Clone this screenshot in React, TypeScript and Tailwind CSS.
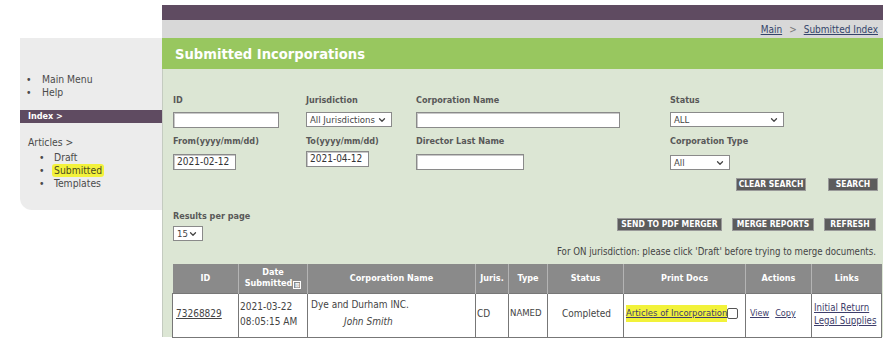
import { ChevronDown } from "lucide-react";

const font = "font-['DejaVu_Sans_Condensed','DejaVu_Sans',sans-serif]";

function Label({ children }: { children: React.ReactNode }) {
  return <div className="h-[13px] text-[9px] font-bold leading-[13px] text-[#585858]">{children}</div>;
}

function TextBox({ w, value, className = "" }: { w: string; value?: string; className?: string }) {
  return (
    <div
      className={`${w} h-[16px] border border-[#8a8a8a] bg-white px-[3px] text-[10px] leading-[14px] text-[#333] shadow-[inset_1px_1px_0_#c8c8c8] ${className}`}
    >
      {value}
    </div>
  );
}

function Select({ w, value }: { w: string; value: string }) {
  return (
    <div
      className={`${w} flex h-[15px] items-center justify-between border border-[#8a8a8a] bg-white pl-[3px] pr-[4px] text-[9.5px] leading-[13px] text-[#444]`}
    >
      <span>{value}</span>
      <ChevronDown size={10} strokeWidth={3} className="text-[#444]" />
    </div>
  );
}

function Btn({ children, w }: { children: React.ReactNode; w: string }) {
  return (
    <div
      className={`${w} flex h-[13px] items-center justify-center border border-[#9a9a9a] bg-[#5c5c5c] text-[8.5px] font-bold uppercase leading-none text-white`}
    >
      {children}
    </div>
  );
}

export default function App() {
  return (
    <div className={`flex h-[358px] w-[892px] overflow-hidden bg-white ${font}`}>
      {/* sidebar */}
      <div className="w-[162px] shrink-0 pl-[20px] pt-[38px]">
        <div className="h-[172px] rounded-bl-[12px] bg-[#ececec] text-[10.3px] text-[#4a4a4a]">
          <ul className="pt-[35px] leading-[13px]">
            <li className="flex">
              <span className="w-[22px] pl-[6px]">•</span>Main Menu
            </li>
            <li className="flex">
              <span className="w-[22px] pl-[6px]">•</span>Help
            </li>
          </ul>
          <div className="mt-[11px] h-[13px] bg-[#5f4b61] pl-[8px] text-[9px] font-bold leading-[13px] text-white">
            Index &gt;
          </div>
          <div className="mt-[13px] pl-[8px] leading-[13px]">Articles &gt;</div>
          <ul className="mt-[2px] leading-[13px]">
            <li className="flex">
              <span className="w-[34px] pl-[19px]">•</span>Draft
            </li>
            <li className="flex">
              <span className="w-[32px] pl-[19px]">•</span>
              <span className="rounded-[3px] bg-[#f3f23c] px-[2px] text-[#4a4a20]">Submitted</span>
            </li>
            <li className="flex">
              <span className="w-[34px] pl-[19px]">•</span>Templates
            </li>
          </ul>
        </div>
      </div>

      {/* main */}
      <div className="w-[721px] shrink-0 pt-[5px]">
        <div className="h-[15px] bg-[#5f4b61]" />
        <div className="flex h-[18px] items-center justify-end gap-[7px] bg-[#d8d8d8] pr-[5px] text-[10px] text-[#34446a]">
          <span className="underline">Main</span>
          <span className="text-[#777]">&gt;</span>
          <span className="underline">Submitted Index</span>
        </div>
        <div className="flex h-[31px] items-center bg-[#98c75f] pl-[13px] text-[14.6px] font-bold text-white">
          Submitted Incorporations
        </div>
        <div className="h-[268px] border-l border-[#c4cbc0] bg-[#dce6d4] pl-[9px] pr-[3px]">
          {/* search row 1 */}
          <div className="flex pt-[25px]">
            <div className="w-[134px] pl-[1px]">
              <Label>ID</Label>
              <TextBox w="w-[106px]" className="mt-[5px]" />
            </div>
            <div className="w-[110px]">
              <Label>Jurisdiction</Label>
              <div className="mt-[5px]">
                <Select w="w-[86px]" value="All Jurisdictions" />
              </div>
            </div>
            <div className="w-[254px]">
              <Label>Corporation Name</Label>
              <TextBox w="w-[204px]" className="mt-[5px]" />
            </div>
            <div>
              <Label>Status</Label>
              <div className="mt-[5px]">
                <Select w="w-[114px]" value="ALL" />
              </div>
            </div>
          </div>

          {/* search row 2 */}
          <div className="flex pt-[7px]">
            <div className="w-[134px] pl-[1px]">
              <Label>From(yyyy/mm/dd)</Label>
              <TextBox w="w-[63px]" className="mt-[6px]" value="2021-02-12" />
            </div>
            <div className="w-[110px]">
              <Label>To(yyyy/mm/dd)</Label>
              <TextBox w="w-[63px]" className="mt-[3px]" value="2021-04-12" />
            </div>
            <div className="w-[254px]">
              <Label>Director Last Name</Label>
              <TextBox w="w-[108px]" className="mt-[6px]" />
            </div>
            <div>
              <Label>Corporation Type</Label>
              <div className="mt-[7px]">
                <Select w="w-[60px]" value="All" />
              </div>
            </div>
          </div>

          <div className="mt-[8px] flex justify-end gap-[22px] pr-[2px]">
            <Btn w="w-[70px]">Clear Search</Btn>
            <Btn w="w-[50px]">Search</Btn>
          </div>

          {/* results / actions */}
          <div className="mt-[19px] flex items-start justify-between pr-[4px]">
            <div className="pl-[1px]">
              <Label>Results per page</Label>
              <div className="mt-[3px]">
                <Select w="w-[30px]" value="15" />
              </div>
            </div>
            <div className="mt-[8px] flex gap-[10px]">
              <Btn w="w-[105px]">Send to PDF Merger</Btn>
              <Btn w="w-[82px]">Merge Reports</Btn>
              <Btn w="w-[52px]">Refresh</Btn>
            </div>
          </div>
          <div className="mt-[4px] pr-[4px] text-right text-[9.6px] leading-[13px] text-[#444]">
            For ON jurisdiction: please click 'Draft' before trying to merge documents.
          </div>

          {/* results table */}
          <table className="mt-[6px] w-[709px] table-fixed border-collapse text-[10px] text-[#444]">
            <colgroup>
              <col className="w-[66px]" />
              <col className="w-[69px]" />
              <col className="w-[168px]" />
              <col className="w-[33px]" />
              <col className="w-[39px]" />
              <col className="w-[76px]" />
              <col className="w-[122px]" />
              <col className="w-[66px]" />
              <col className="w-[70px]" />
            </colgroup>
            <thead>
              <tr className="h-[29px] bg-[#8a8a8a] text-[9px] font-bold text-white">
                <th className="border-r border-[#b4b4b4]">ID</th>
                <th className="border-r border-[#b4b4b4] leading-[11px]">
                  Date
                  <br />
                  Submitted
                  <span className="ml-[1px] inline-block h-[8px] w-[8px] border border-white align-[-1px] text-[6px] leading-[6px]">
                    ⊠
                  </span>
                </th>
                <th className="border-r border-[#b4b4b4]">Corporation Name</th>
                <th className="border-r border-[#b4b4b4]">Juris.</th>
                <th className="border-r border-[#b4b4b4]">Type</th>
                <th className="border-r border-[#b4b4b4]">Status</th>
                <th className="border-r border-[#b4b4b4]">Print Docs</th>
                <th className="border-r border-[#b4b4b4]">Actions</th>
                <th>Links</th>
              </tr>
            </thead>
            <tbody>
              <tr className="h-[44px] bg-white align-middle">
                <td className="border border-[#777] pb-[3px] pl-[3px]">
                  <span className="underline">73268829</span>
                </td>
                <td className="border border-[#777] pb-[3px] pl-[1px] leading-[15px]">
                  2021-03-22
                  <br />
                  08:05:15 AM
                </td>
                <td className="border border-[#777] pl-[3px] pt-[2px] align-top leading-[17px]">
                  Dye and Durham INC.
                  <div className="pl-[33px] italic">John Smith</div>
                </td>
                <td className="border border-[#777] pb-[3px] pl-[1px]">CD</td>
                <td className="border border-[#777] pb-[3px] pl-[1px] text-[9.5px]">NAMED</td>
                <td className="border border-[#777] pb-[3px] pl-[14px]">Completed</td>
                <td className="border border-[#777] pb-[3px] pl-[2px]">
                  <div className="flex items-center">
                    <span className="bg-[#f2f23a] py-[1px] text-[9.4px] text-[#3d3d6a] underline">
                      Articles of Incorporation
                    </span>
                    <span className="inline-block h-[11px] w-[11px] rounded-[2px] border border-[#555] bg-white" />
                  </div>
                </td>
                <td className="border border-[#777] pb-[3px] pl-[4px] text-[9px] text-[#3d3d6a]">
                  <span className="underline">View</span>
                  <span className="ml-[6px] underline">Copy</span>
                </td>
                <td className="border border-[#777] pb-[3px] pl-[2px] text-[9.6px] leading-[13px] text-[#3d3d6a]">
                  <div className="underline">Initial Return</div>
                  <div className="underline">Legal Supplies</div>
                </td>
              </tr>
            </tbody>
          </table>
        </div>
      </div>
    </div>
  );
}
